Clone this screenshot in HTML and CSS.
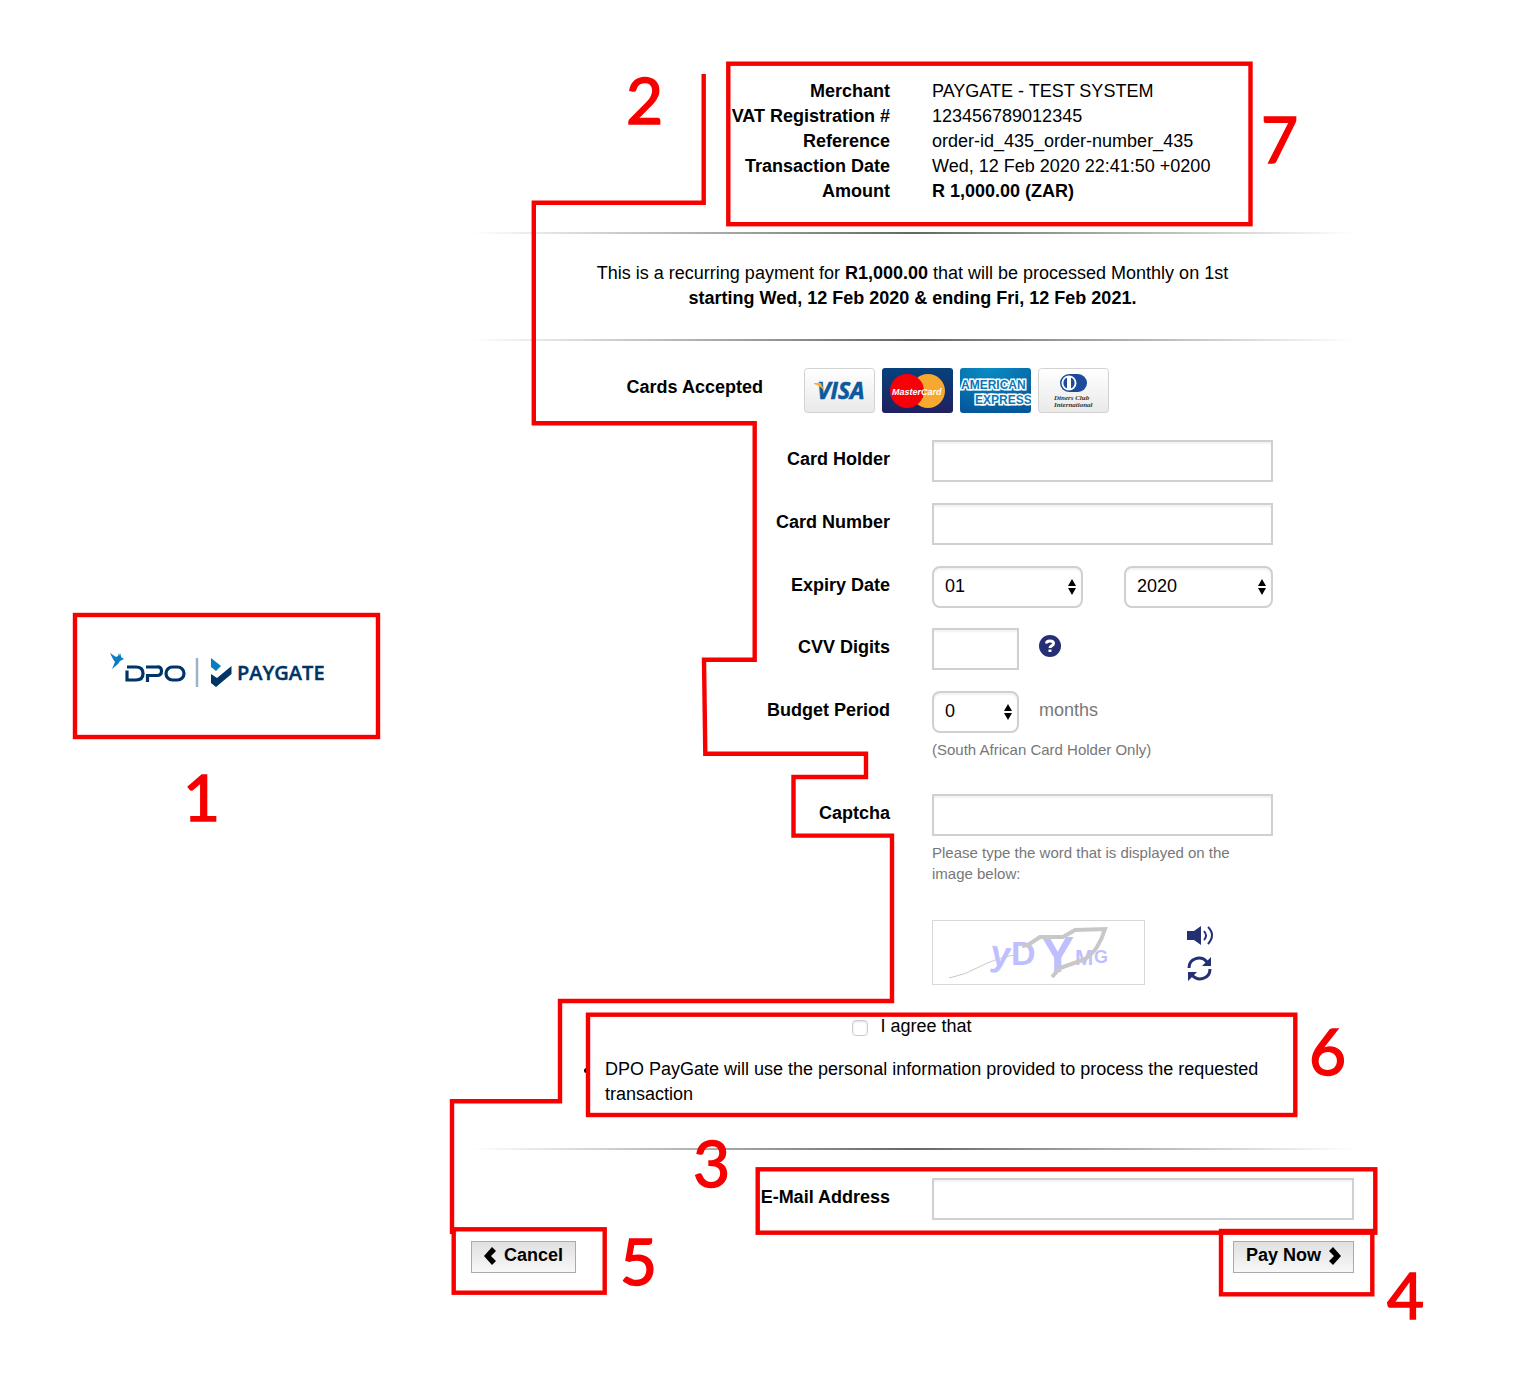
FILE: index.html
```
<!DOCTYPE html>
<html lang="en">
<head>
<meta charset="utf-8">
<title>DPO PayGate payment</title>
<link rel="stylesheet" href="styles.css">
</head>
<body>
<div class="page">
  <aside class="brand">
    <svg class="logo" width="218" height="40" viewBox="0 0 218 40" role="img" aria-label="DPO PayGate">
      <path fill="#0a7dc1" d="M0 1l6 4 2-1 1-3 1 3 1-3v4l3 2-4 2-2 3-6 5 3-7-2-3z"/>
      <g fill="none" stroke="#003366" stroke-width="3.200">
        <path d="M17 15h9q7 0 7 6.500t-7 6.500h-9V18.500"/>
        <path d="M37.500 30v-6.500h9.500q4.500 0 4.500-4.500T47 15H36"/>
        <rect x="56" y="15" width="18" height="13" rx="6.500"/>
      </g>
      <path stroke="#9db2c8" stroke-width="2.500" d="M87 6v29"/>
      <path fill="#0a7dc1" d="M101 6l10 8-5 5-5-4z"/>
      <path fill="#003366" d="M101 22l6 4 14.500-12v8L106 35l-5-4z"/>
      <text class="logo-word" x="127" y="28">PAYGATE</text>
    </svg>
  </aside>

  <main class="payment">
    <table class="summary">
      <tr><th scope="row">Merchant</th><td>PAYGATE - TEST SYSTEM</td></tr>
      <tr><th scope="row">VAT Registration #</th><td>123456789012345</td></tr>
      <tr><th scope="row">Reference</th><td>order-id_435_order-number_435</td></tr>
      <tr><th scope="row">Transaction Date</th><td>Wed, 12 Feb 2020 22:41:50 +0200</td></tr>
      <tr><th scope="row">Amount</th><td><strong>R 1,000.00 (ZAR)</strong></td></tr>
    </table>
    <hr class="rule">
    <p class="recurring">This is a recurring payment for <strong>R1,000.00</strong> that will be processed Monthly on 1st<br><strong>starting Wed, 12 Feb 2020 &amp; ending Fri, 12 Feb 2021.</strong></p>
    <hr class="rule">

    <form class="form">
      <div class="cards">
        <span class="cards-label">Cards Accepted</span>
        <div class="cards-list">
          <svg width="71" height="46" viewBox="0 0 71 46" role="img" aria-label="Visa">
            <defs>
              <linearGradient id="paper" x2="0" y2="1"><stop stop-color="#fff"/><stop offset="1" stop-color="#e9e9e9"/></linearGradient>
              <linearGradient id="navy" x2="0" y2="1"><stop stop-color="#06427c"/><stop offset="1" stop-color="#20205f"/></linearGradient>
              <radialGradient id="sky" cx=".4" cy="0" r="1"><stop stop-color="#0a8cc4"/><stop offset="1" stop-color="#05589a"/></radialGradient>
            </defs>
            <rect x=".5" y=".5" width="70" height="44" rx="3" fill="url(#paper)" stroke="#d2d2d2"/>
            <text class="visa" x="13" y="31">VISA</text>
            <path fill="#f5b335" d="M10 15h7l3 8q-3-5-10-7z"/>
          </svg>
          <svg width="71" height="46" viewBox="0 0 71 46" role="img" aria-label="MasterCard">
            <rect width="71" height="45" rx="3" fill="url(#navy)"/>
            <circle cx="46" cy="23" r="17" fill="#f7a92f"/>
            <circle cx="25" cy="23" r="17" fill="#f80008"/>
            <path stroke="#f80008" d="M32 14.500h7M32 17.500h9M32 29.500h9M32 32.500h7"/>
            <text class="mastercard" x="10" y="27">MasterCard</text>
          </svg>
          <svg width="71" height="46" viewBox="0 0 71 46" role="img" aria-label="American Express">
            <rect width="71" height="45" rx="3" fill="url(#sky)"/>
            <text class="amex" x="1" y="21">AMERICAN</text>
            <text class="amex" x="15" y="36">EXPRESS</text>
          </svg>
          <svg width="71" height="46" viewBox="0 0 71 46" role="img" aria-label="Diners Club International">
            <rect x=".5" y=".5" width="70" height="44" rx="3" fill="url(#paper)" stroke="#d2d2d2"/>
            <rect x="22" y="6" width="27" height="18" rx="9" fill="#1c4b9b"/>
            <circle cx="31" cy="15" r="7.500" fill="#fff"/>
            <path fill="#1c4b9b" d="M29 9.500a6 6 0 0 0 0 11zM33 9.500a6 6 0 0 1 0 11z"/>
            <text class="diners" x="16" y="32">Diners Club</text>
            <text class="diners" x="16" y="39">International</text>
          </svg>
        </div>
      </div>

      <div class="row">
        <label for="holder">Card Holder</label>
        <div class="field"><input class="box" id="holder" type="text"></div>
      </div>
      <div class="row">
        <label for="number">Card Number</label>
        <div class="field"><input class="box" id="number" type="text"></div>
      </div>
      <div class="row dates">
        <label for="month">Expiry Date</label>
        <div class="field expiry">
          <span class="picker"><select id="month"><option>01</option></select><svg width="8" height="16" viewBox="0 0 8 16"><path d="M4 0l4 7H0zM4 16l4-7H0z"/></svg></span>
          <span class="picker"><select id="year" aria-label="Expiry year"><option>2020</option></select><svg width="8" height="16" viewBox="0 0 8 16"><path d="M4 0l4 7H0zM4 16l4-7H0z"/></svg></span>
        </div>
      </div>
      <div class="row">
        <label for="cvv">CVV Digits</label>
        <div class="field inline">
          <input class="box short" id="cvv" type="text">
          <svg class="help" width="22" height="22" viewBox="0 0 22 22" role="img" aria-label="Help"><circle cx="11" cy="11" r="11" fill="#252f74"/><path fill="none" stroke="#fff" stroke-width="3" d="M7.500 8.500q0-2.500 3.500-2.500 3.500 0 3.500 2.500c0 2.500-3.500 2-3.500 4.500"/><path fill="#fff" d="M9.500 14.500h3v2.500h-3z"/></svg>
        </div>
      </div>
      <div class="row budget">
        <label for="budget">Budget Period</label>
        <div class="field">
          <div class="inline">
            <span class="picker short"><select id="budget"><option>0</option></select><svg width="8" height="16" viewBox="0 0 8 16"><path d="M4 0l4 7H0zM4 16l4-7H0z"/></svg></span>
            <span class="unit">months</span>
          </div>
          <p class="hint">(South African Card Holder Only)</p>
        </div>
      </div>
      <div class="row captcha">
        <label for="captcha">Captcha</label>
        <div class="field">
          <input class="box" id="captcha" type="text">
          <p class="hint">Please type the word that is displayed on the image below:</p>
          <div class="challenge">
            <svg class="challenge-image" width="213" height="66" viewBox="0 0 213 66" role="img" aria-label="Captcha image">
              <rect x=".5" y=".5" width="212" height="64" fill="#fff" stroke="#d8d8d8"/>
              <g class="challenge-text">
                <text x="58" y="46" font-size="36" transform="rotate(8 68 40)">y</text>
                <text x="79" y="45" font-size="34">D</text>
                <text x="109" y="52" font-size="50">Y</text>
                <text x="143" y="45" font-size="22">M</text>
                <text x="162" y="43" font-size="18">G</text>
              </g>
              <g fill="none" stroke="#c8c8c8">
                <path d="M17 58q16-3 30-11t39-13"/>
                <path stroke-width="4" d="M90 26l6-1 12-8h23l12-7 30-1q-3 10-8 18-6 9-14 13l-23 8-8 9"/>
              </g>
            </svg>
            <div class="challenge-tools">
              <svg width="27" height="20" viewBox="0 0 27 20" role="img" aria-label="Play audio"><path fill="#252f74" d="M0 5h7l7-5v19l-7-5H0z"/><path fill="none" stroke="#252f74" stroke-width="2" d="M17 5q4 5 0 9M21 1q8 8 0 17"/></svg>
              <svg width="25" height="26" viewBox="0 0 25 26" role="img" aria-label="New image"><path fill="none" stroke="#252f74" stroke-width="3" d="M2 12C2 2 14-1 20 6M23 13c0 10-12 13-18 6"/><path fill="#252f74" d="M24 1v9h-9zM1 25v-9h9z"/></svg>
            </div>
          </div>
        </div>
      </div>

      <div class="consent">
        <label class="agree"><input type="checkbox"><span>I agree that</span></label>
        <ul>
          <li>DPO PayGate will use the personal information provided to process the requested transaction</li>
        </ul>
      </div>
      <hr class="rule">
      <div class="row email">
        <label for="email">E-Mail Address</label>
        <div class="field"><input class="box" id="email" type="email"></div>
      </div>
      <div class="actions">
        <button type="button"><svg width="12" height="18" viewBox="0 0 12 18"><path d="M8 0l4 4-5 5 5 5-4 4-8-9z"/></svg>Cancel</button>
        <button type="submit">Pay Now<svg width="12" height="18" viewBox="0 0 12 18"><path d="M4 0L0 4l5 5-5 5 4 4 8-9z"/></svg></button>
      </div>
    </form>
  </main>

  <svg class="callouts" width="1514" height="1398" viewBox="0 0 1514 1398">
    <g class="callout-lines">
      <rect x="75" y="615" width="303" height="122"/>
      <rect x="728.300" y="63.700" width="522.200" height="160.500"/>
      <rect x="588" y="1014.700" width="707.300" height="100.300"/>
      <rect x="757.700" y="1169.300" width="617.600" height="63.400"/>
      <rect x="453.700" y="1229.300" width="151" height="63.400"/>
      <rect x="1221" y="1231" width="151.300" height="63.300"/>
      <path d="M703.700 74v128.700H533.800v220.600h220.900v236.400H704l1.300 94H866V777h-72.500v58.600H892V1001H560v100.300H452V1234"/>
    </g>
    <g class="callout-numbers">
      <text x="183" y="821">1</text>
      <text x="626" y="124">2</text>
      <text x="693" y="1187">3</text>
      <text x="1387" y="1319">4</text>
      <text x="620" y="1285">5</text>
      <text x="1309" y="1075">6</text>
      <text x="1261" y="163">7</text>
    </g>
  </svg>
</div>
</body>
</html>
```
FILE: styles.css
```
* {
  box-sizing: border-box;
}

body {
  margin: 0;
  background: #fff;
  color: #000;
  font: 18px/25px "Liberation Sans", Arial, sans-serif;
}

p,
ul {
  margin: 0;
}

svg {
  display: block;
}

.page {
  position: relative;
  display: grid;
  grid-template-columns: 307px minmax(0, 1fr);
  column-gap: 91px;
  padding: 79px 160px 125px 73px;
}

.brand {
  align-self: center;
  padding: 0 0 8px 37px;
}

.logo-word {
  font: 600 20px "Open Sans", sans-serif;
  fill: #003366;
  stroke: #003366;
  stroke-width: 0.4px;
}

/* Transaction summary */
.summary {
  width: 100%;
  border-collapse: collapse;
}

.summary th,
.summary td {
  padding: 0;
}

.summary th {
  width: 419px;
  text-align: right;
}

.summary td {
  padding-left: 42px;
}

.rule {
  height: 2px;
  margin: 28px 0 27px;
  border: 0;
  background: linear-gradient(to right, transparent, #666, transparent);
}

.recurring {
  text-align: center;
}

/* Accepted cards */
.cards {
  display: grid;
  grid-template-columns: 292px 1fr;
  column-gap: 41px;
  margin-bottom: 26px;
}

.cards-label {
  padding-top: 7px;
  font-weight: 700;
  text-align: right;
}

.cards-list {
  display: flex;
  gap: 7px;
}

.visa {
  font: italic 700 23px "Open Sans", sans-serif;
  fill: #0b5a9d;
  stroke: #0b5a9d;
  stroke-width: 0.6px;
}

.mastercard {
  font: italic 700 9px "Liberation Sans", sans-serif;
  fill: #fff;
}

.amex {
  font: 700 12px "Liberation Sans", sans-serif;
  fill: #0a78b5;
  stroke: #fff;
  stroke-width: 3px;
  paint-order: stroke;
}

.diners {
  font: italic 700 7px "Liberation Serif", serif;
  fill: #333;
}

/* Form rows */
.row {
  display: grid;
  grid-template-columns: 419px minmax(0, 1fr);
  column-gap: 42px;
  margin-bottom: 21px;
}

.row > label {
  padding-top: 7px;
  font-weight: 700;
  text-align: right;
}

.field {
  max-width: 341px;
}

.email .field {
  max-width: none;
}

.box,
.picker select {
  display: block;
  width: 100%;
  height: 42px;
  margin: 0;
  padding: 0 11px 2px;
  border: 2px solid #d0d0d0;
  background: #fff;
  box-shadow: inset 0 2px 2px #f2f2f2;
  color: #000;
  font: inherit;
}

.box.short {
  width: 87px;
}

.picker {
  position: relative;
  display: block;
}

.picker select {
  appearance: none;
  border-radius: 8px;
}

.picker svg {
  position: absolute;
  top: 13px;
  right: 7px;
  pointer-events: none;
}

.expiry {
  display: grid;
  grid-template-columns: 151px 149px;
  justify-content: space-between;
}

.inline {
  display: flex;
  gap: 20px;
}

.short {
  width: 87px;
}

.help {
  margin-top: 7px;
}

.unit {
  padding-top: 7px;
  color: #777;
}

.hint {
  padding-top: 6px;
  color: #777;
  font-size: 15px;
  line-height: 21px;
}

.dates {
  margin-bottom: 20px;
}

.budget {
  margin-bottom: 34px;
}

.captcha {
  margin-bottom: 28px;
}

.challenge {
  display: flex;
  gap: 42px;
  margin-top: 36px;
}

.challenge-text {
  font-family: "Liberation Sans", sans-serif;
  font-weight: 700;
  fill: #bfbfff;
}

.challenge-tools {
  display: grid;
  align-content: start;
  gap: 10px;
  padding-top: 6px;
}

/* Consent */
.consent {
  padding: 0 80px 0 114px;
}

.agree {
  display: flex;
  justify-content: center;
  gap: 12px;
  padding-right: 35px;
}

.agree input {
  appearance: none;
  width: 16px;
  height: 16px;
  margin: 6px 0 0;
  border: 1px solid #ccc;
  border-radius: 4px;
  box-shadow: inset 0 1px 2px #ddd;
}

.consent ul {
  margin-top: 18px;
  padding-left: 16px;
}

.consent li {
  padding-left: 4px;
}

.form > .rule {
  margin: 41px 0 28px;
}

.actions {
  display: flex;
  justify-content: space-between;
}

.actions button {
  display: flex;
  align-items: center;
  gap: 8px;
  height: 32px;
  padding: 0 12px 3px;
  border: 1px solid #aaa;
  background: linear-gradient(#e0e0e0, #f8f8f8);
  color: #000;
  font: inherit;
  font-weight: 700;
}

/* Numbered callouts drawn over the page */
.callouts {
  position: absolute;
  top: 0;
  left: 0;
  pointer-events: none;
}

.callout-lines {
  fill: none;
  stroke: #f60000;
  stroke-width: 4.4px;
}

.callout-numbers {
  fill: #f60000;
  stroke: #f60000;
  stroke-width: 1.5px;
  font: 400 64px Lato, sans-serif;
}
```
